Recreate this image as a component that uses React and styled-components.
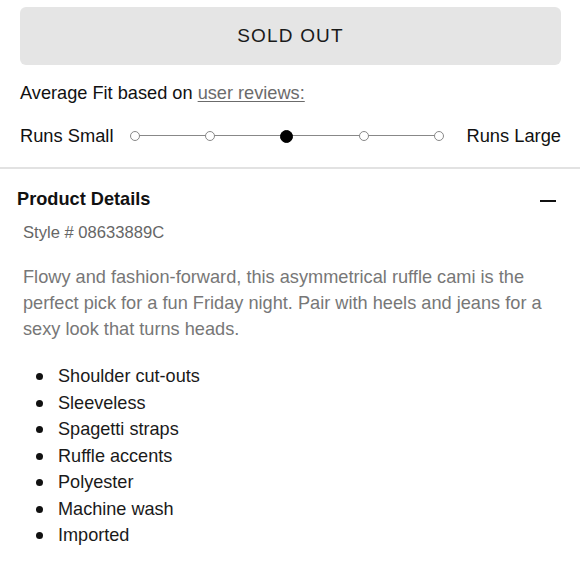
import styled, { createGlobalStyle } from "styled-components";

const GlobalStyle = createGlobalStyle`
  body {
    margin: 0;
    background: #ffffff;
    font-family: "Liberation Sans", Arial, sans-serif;
  }
`;

const features = [
  "Shoulder cut-outs",
  "Sleeveless",
  "Spagetti straps",
  "Ruffle accents",
  "Polyester",
  "Machine wash",
  "Imported",
];

const FitScale = ({ steps, active }) => (
  <Track>
    {Array.from({ length: steps }).map((_, i) => (
      <Dot key={i} $active={i === active} />
    ))}
  </Track>
);

export default function App() {
  return (
    <Page>
      <GlobalStyle />
      <TopSection>
        <SoldOutButton disabled>SOLD OUT</SoldOutButton>
        <FitLabel>
          Average Fit based on <ReviewLink href="#">user reviews:</ReviewLink>
        </FitLabel>
        <FitRow>
          <FitEnd>Runs Small</FitEnd>
          <FitScale steps={5} active={2} />
          <FitEnd>Runs Large</FitEnd>
        </FitRow>
      </TopSection>

      <Details>
        <DetailsHeader>
          <DetailsTitle>Product Details</DetailsTitle>
          <Collapse />
        </DetailsHeader>
        <StyleNumber>Style # 08633889C</StyleNumber>
        <Description>
          Flowy and fashion-forward, this asymmetrical ruffle cami is the
          perfect pick for a fun Friday night. Pair with heels and jeans for a
          sexy look that turns heads.
        </Description>
        <FeatureList>
          {features.map((f) => (
            <Feature key={f}>{f}</Feature>
          ))}
        </FeatureList>
      </Details>
    </Page>
  );
}

const Page = styled.div`
  width: 580px;
  height: 580px;
  overflow: hidden;
  color: #111;
`;

const TopSection = styled.div`
  padding: 7px 19px 21px 20px;
  border-bottom: 2px solid #e2e2e2;
`;

const SoldOutButton = styled.button`
  display: block;
  width: 100%;
  height: 58px;
  background: #e5e5e5;
  border: none;
  border-radius: 6px;
  color: #1a1a1a;
  font-family: "Liberation Sans", Arial, sans-serif;
  font-size: 19px;
  letter-spacing: 1.2px;
  padding: 0;
`;

const FitLabel = styled.div`
  margin-top: 18px;
  font-size: 18.2px;
  line-height: 20px;
`;

const ReviewLink = styled.a`
  color: #6b6b6b;
  text-decoration: underline;
  text-underline-offset: 2px;
`;

const FitRow = styled.div`
  display: flex;
  align-items: center;
  justify-content: space-between;
  margin-top: 23px;
  font-size: 18.3px;
  line-height: 20px;
`;

const FitEnd = styled.span`
  white-space: nowrap;
`;

const Track = styled.div`
  position: relative;
  width: 314px;
  height: 14px;
  display: flex;
  align-items: center;
  justify-content: space-between;
  margin: 0 22px 0 16px;

  &::before {
    content: "";
    position: absolute;
    left: 5px;
    right: 5px;
    top: 6px;
    height: 1px;
    background: #888;
  }
`;

const Dot = styled.span`
  position: relative;
  box-sizing: border-box;
  width: ${(p) => (p.$active ? "13px" : "10px")};
  height: ${(p) => (p.$active ? "13px" : "10px")};
  border-radius: 50%;
  background: ${(p) => (p.$active ? "#000" : "#fff")};
  border: 1.2px solid ${(p) => (p.$active ? "#000" : "#888")};
`;

const Details = styled.div`
  padding: 19px 24px 0 17px;
`;

const DetailsHeader = styled.div`
  display: flex;
  align-items: center;
  justify-content: space-between;
`;

const DetailsTitle = styled.h2`
  margin: 0;
  font-size: 18.2px;
  font-weight: 700;
  line-height: 22px;
`;

const Collapse = styled.span`
  width: 16px;
  height: 2px;
  background: #111;
  margin-top: 4px;
`;

const StyleNumber = styled.div`
  margin: 13px 0 0 6px;
  font-size: 16.6px;
  color: #666;
  line-height: 20px;
`;

const Description = styled.p`
  margin: 21px 0 0 6px;
  max-width: 530px;
  font-size: 18.2px;
  line-height: 26px;
  color: #777;
`;

const FeatureList = styled.ul`
  margin: 21px 0 0 0;
  padding-left: 41px;
  list-style: none;
  font-size: 18.1px;
  line-height: 26.5px;
  color: #1a1a1a;
`;

const Feature = styled.li`
  position: relative;

  &::before {
    content: "";
    position: absolute;
    left: -22px;
    top: 10px;
    width: 7px;
    height: 7px;
    border-radius: 50%;
    background: #111;
  }
`;
